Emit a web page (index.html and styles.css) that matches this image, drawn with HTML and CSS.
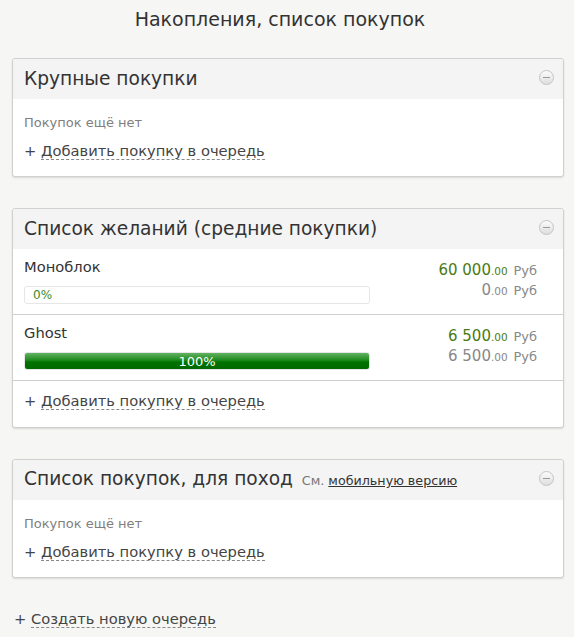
FILE: index.html
```html
<!DOCTYPE html>
<html lang="ru">
<head>
<meta charset="utf-8">
<title>Накопления, список покупок</title>
<link rel="stylesheet" href="styles.css">
</head>
<body>
<div class="page">
  <h1 class="page-title">Накопления, список покупок</h1>

  <section class="panel">
    <header class="panel-head">
      <h2 class="panel-title">Крупные покупки</h2>
      <span class="toggle"></span>
    </header>
    <div class="panel-body">
      <div class="empty">Покупок ещё нет</div>
      <div class="add"><span class="plus">+</span> <a class="dash">Добавить покупку в очередь</a></div>
    </div>
  </section>

  <section class="panel">
    <header class="panel-head">
      <h2 class="panel-title">Список желаний (средние покупки)</h2>
      <span class="toggle"></span>
    </header>
    <div class="item">
      <div class="item-main">
        <div class="item-name">Моноблок</div>
        <div class="bar"><div class="bar-fill" style="width:0%"></div><span class="bar-label left">0%</span></div>
      </div>
      <div class="prices">
        <div class="price goal">60 000<small>.00</small> <span class="cur">Руб</span></div>
        <div class="price saved">0<small>.00</small> <span class="cur">Руб</span></div>
      </div>
    </div>
    <div class="item">
      <div class="item-main">
        <div class="item-name">Ghost</div>
        <div class="bar"><div class="bar-fill" style="width:100%"></div><span class="bar-label">100%</span></div>
      </div>
      <div class="prices">
        <div class="price goal">6 500<small>.00</small> <span class="cur">Руб</span></div>
        <div class="price saved">6 500<small>.00</small> <span class="cur">Руб</span></div>
      </div>
    </div>
    <div class="panel-foot">
      <div class="add"><span class="plus">+</span> <a class="dash">Добавить покупку в очередь</a></div>
    </div>
  </section>

  <section class="panel">
    <header class="panel-head">
      <h2 class="panel-title">Список покупок, для поход <span class="see">См. <a class="mobile">мобильную версию</a></span></h2>
      <span class="toggle"></span>
    </header>
    <div class="panel-body">
      <div class="empty">Покупок ещё нет</div>
      <div class="add"><span class="plus">+</span> <a class="dash">Добавить покупку в очередь</a></div>
    </div>
  </section>

  <div class="create"><span class="plus">+</span> <a class="dash">Создать новую очередь</a></div>
</div>
</body>
</html>
```

FILE: styles.css
```css
html, body {
  margin: 0;
  padding: 0;
}
body {
  background: #f6f6f4;
  font-family: "DejaVu Sans", Verdana, sans-serif;
  color: #333;
}
.page {
  padding: 0 10px 0 12px;
}
.page-title {
  margin: 0;
  padding: 7px 16px 0 0;
  height: 51px;
  line-height: 24px;
  font-size: 19px;
  font-weight: normal;
  text-align: center;
  color: #333;
}
.panel {
  background: #fff;
  border: 1px solid #d0d0d0;
  border-radius: 3px;
  box-shadow: 0 1px 2px rgba(0,0,0,0.12);
  margin-bottom: 31px;
}
.panel-head {
  display: flex;
  align-items: center;
  justify-content: space-between;
  height: 40px;
  background: #f4f4f4;
  padding: 0 9px 0 11px;
  border-radius: 3px 3px 0 0;
}
.panel-title {
  margin: 0;
  font-size: 18.6px;
  font-weight: normal;
  color: #333;
  line-height: 40px;
  white-space: nowrap;
}
.see {
  font-size: 12.7px;
  color: #777;
  margin-left: 3px;
}
.mobile {
  color: #333;
  text-decoration: underline;
}
.toggle {
  width: 13px;
  height: 13px;
  border-radius: 50%;
  border: 1px solid #c4c4c4;
  background: linear-gradient(#fbfbfb, #dedede);
  position: relative;
  margin-top: -3px;
}
.toggle::after {
  content: "";
  position: absolute;
  left: 3px;
  right: 3px;
  top: 6px;
  height: 1px;
  background: #9a9a9a;
}
.panel-body {
  padding: 15px 11px 15px;
}
.empty {
  font-size: 13px;
  line-height: 18px;
  color: #808080;
  margin-bottom: 9px;
}
.add, .create {
  font-size: 14.7px;
  line-height: 20px;
  color: #444;
}
.dash {
  color: #444;
  text-decoration: none;
  border-bottom: 1px dashed #888;
}
.item {
  display: grid;
  grid-template-columns: 346px 1fr;
  padding: 8px 26px 10px 11px;
  border-bottom: 1px solid #cfcfcf;
}
.item-name {
  font-size: 14.7px;
  line-height: 20px;
  color: #333;
  margin-bottom: 9px;
}
.bar {
  position: relative;
  height: 16px;
  border: 1px solid #e6e6e6;
  border-radius: 3px;
  background: #fff;
  overflow: hidden;
}
.bar-fill {
  position: absolute;
  left: 0;
  top: 0;
  bottom: 0;
  background: linear-gradient(#62b362, #1e8a1e 45%, #007400 55%, #006800);
}
.bar-label {
  position: absolute;
  left: 0;
  right: 0;
  top: 0;
  line-height: 17px;
  font-size: 13px;
  text-align: center;
  color: #fff;
}
.bar-label.left {
  text-align: left;
  padding-left: 8px;
  color: #3a8a2a;
  font-size: 12px;
}
.prices {
  text-align: right;
  padding-top: 4px;
}
.price {
  font-size: 15px;
  line-height: 19px;
}
.price small {
  font-size: 10.5px;
}
.price .cur {
  font-size: 13px;
  color: #888;
  margin-left: 1px;
}
.goal {
  color: #4a7a12;
}
.saved {
  color: #888;
}
.panel-foot {
  padding: 10px 11px 16px;
}
.create {
  margin-left: 2px;
}
```
